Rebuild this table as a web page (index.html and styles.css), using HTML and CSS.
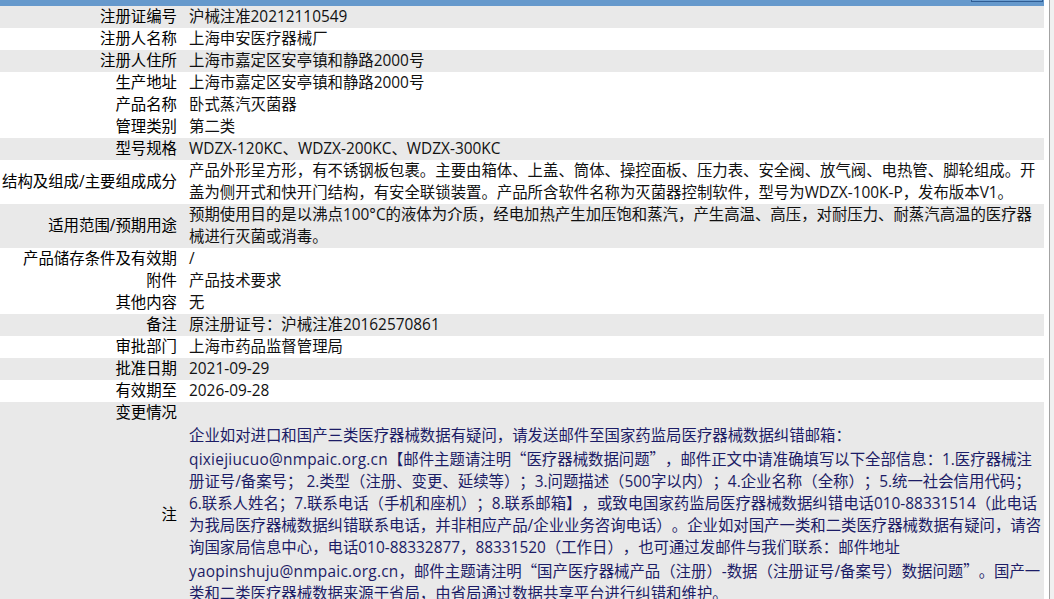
FILE: index.html
```html
<!DOCTYPE html>
<html lang="zh-CN">
<head>
<meta charset="utf-8">
<title>医疗器械注册信息</title>
<link rel="stylesheet" href="styles.css">
</head>
<body>
<div class="shell">
  <div class="page">
    <div class="topbar"><div class="tab"></div></div>
    <div class="sheet">
      <div class="row alt"><div class="label">注册证编号</div><div class="value">沪械注准20212110549</div></div>
      <div class="row"><div class="label">注册人名称</div><div class="value">上海申安医疗器械厂</div></div>
      <div class="row alt"><div class="label">注册人住所</div><div class="value">上海市嘉定区安亭镇和静路2000号</div></div>
      <div class="row"><div class="label">生产地址</div><div class="value">上海市嘉定区安亭镇和静路2000号</div></div>
      <div class="row"><div class="label">产品名称</div><div class="value">卧式蒸汽灭菌器</div></div>
      <div class="row"><div class="label">管理类别</div><div class="value">第二类</div></div>
      <div class="row alt"><div class="label">型号规格</div><div class="value">WDZX-120KC、WDZX-200KC、WDZX-300KC</div></div>
      <div class="row"><div class="label">结构及组成/主要组成成分</div><div class="value">产品外形呈方形，有不锈钢板包裹。主要由箱体、上盖、筒体、操控面板、压力表、安全阀、放气阀、电热管、脚轮组成。开盖为侧开式和快开门结构，有安全联锁装置。产品所含软件名称为灭菌器控制软件，型号为WDZX-100K-P，发布版本V1。</div></div>
      <div class="row alt"><div class="label">适用范围/预期用途</div><div class="value">预期使用目的是以沸点100°C的液体为介质，经电加热产生加压饱和蒸汽，产生高温、高压，对耐压力、耐蒸汽高温的医疗器械进行灭菌或消毒。</div></div>
      <div class="row"><div class="label">产品储存条件及有效期</div><div class="value">/</div></div>
      <div class="row"><div class="label">附件</div><div class="value">产品技术要求</div></div>
      <div class="row"><div class="label">其他内容</div><div class="value">无</div></div>
      <div class="row alt"><div class="label">备注</div><div class="value">原注册证号：沪械注准20162570861</div></div>
      <div class="row"><div class="label">审批部门</div><div class="value">上海市药品监督管理局</div></div>
      <div class="row alt"><div class="label">批准日期</div><div class="value">2021-09-29</div></div>
      <div class="row"><div class="label">有效期至</div><div class="value">2026-09-28</div></div>
      <div class="row alt"><div class="label">变更情况</div><div class="value"></div></div>
      <div class="row alt note"><div class="label">注</div><div class="value">企业如对进口和国产三类医疗器械数据有疑问，请发送邮件至国家药监局医疗器械数据纠错邮箱：<span class="mail">qixiejiucuo@nmpaic.org.cn</span>【邮件主题请注明<span class="q open">“</span>医疗器械数据问题<span class="q close">”</span>，邮件正文中请准确填写以下全部信息：1.医疗器械注册证号/备案号； 2.类型（注册、变更、延续等）；3.问题描述（500字以内）；4.企业名称（全称）；5.统一社会信用代码；6.联系人姓名；7.联系电话（手机和座机）；8.联系邮箱】，或致电国家药监局医疗器械数据纠错电话010-88331514（此电话为我局医疗器械数据纠错联系电话，并非相应产品/企业业务咨询电话）。企业如对国产一类和二类医疗器械数据有疑问，请咨询国家局信息中心，电话010-88332877，88331520（工作日），也可通过发邮件与我们联系：邮件地址<span class="mail">yaopinshuju@nmpaic.org.cn</span>，邮件主题请注明<span class="q open">“</span>国产医疗器械产品（注册）-数据（注册证号/备案号）数据问题<span class="q close">”</span>。国产一类和二类医疗器械数据来源于省局，由省局通过数据共享平台进行纠错和维护。</div></div>
    </div>
  </div>
  <div class="gutter"></div>
  <div class="edge"></div>
</div>
</body>
</html>
```

FILE: styles.css
```css
html, body {
  margin: 0;
  padding: 0;
  overflow: hidden;
  background: #ffffff;
}

body {
  font-family: "Open Sans", "Noto Sans CJK SC", sans-serif;
  font-size: 15.4px;
  line-height: 22px;
  color: #111111;
  text-spacing-trim: space-all;
}

.shell {
  display: flex;
  align-items: stretch;
  min-height: 599px;
}

.page {
  width: 1044px;
  flex: none;
}

.gutter {
  width: 5px;
  flex: none;
  background: #ffffff;
}

.edge {
  flex: 1;
  border-left: 1px solid #a3a3a3;
  background: #f0f0f0;
}

.topbar {
  height: 6px;
  background: #6699cc;
  display: flex;
  justify-content: flex-end;
}

.tab {
  width: 70px;
  height: 1px;
  margin-right: 1px;
  border: 1px solid #2f5d94;
  border-top: none;
  background: #6b9ed2;
}

.sheet {
  display: flex;
  flex-direction: column;
}

.row {
  display: grid;
  grid-template-columns: 178px 1fr;
  column-gap: 11px;
  align-items: center;
  background: #ffffff;
}

.row.alt {
  background: #e9e9e9;
}

.label {
  text-align: right;
  padding-right: 1px;
  white-space: nowrap;
  color: #000000;
}

.value {
  padding-right: 1px;
  min-height: 22px;
  color: #111111;
}

.note {
  padding: 1px 0;
}

.note .value {
  color: #1c1c66;
}

.mail {
  letter-spacing: 0.25px;
}

.q {
  display: inline-block;
  width: 1em;
  font-family: "Noto Sans CJK SC", sans-serif;
}

.q.open {
  text-align: right;
}

.q.close {
  text-align: left;
}
```
